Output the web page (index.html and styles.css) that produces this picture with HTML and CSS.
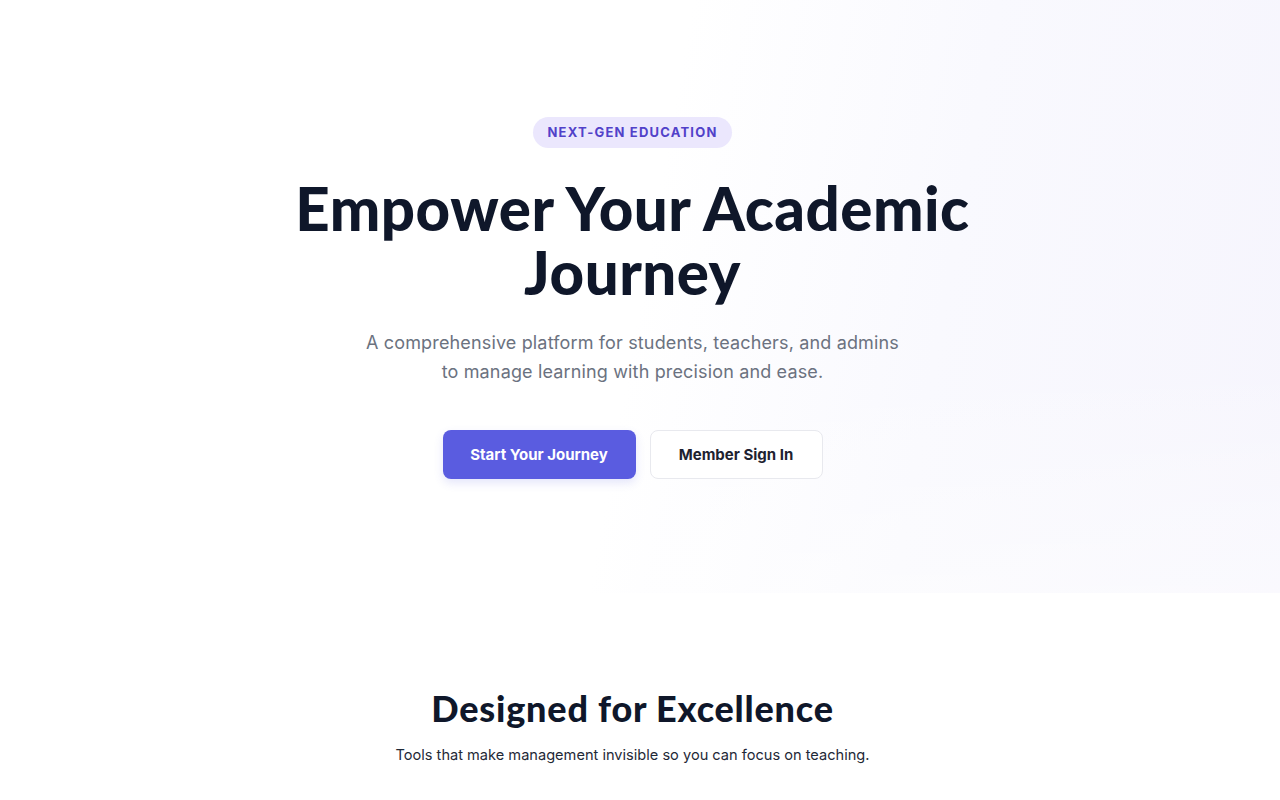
FILE: index.html
```html
<!DOCTYPE html>
<html lang="en">
<head>
<meta charset="utf-8">
<title>Empower Your Academic Journey</title>
<link rel="stylesheet" href="styles.css">
</head>
<body>
<section class="hero">
  <div class="hero-inner">
    <span class="badge">NEXT-GEN EDUCATION</span>
    <h1 class="hero-title"><span class="title-line">Empower Your Academic</span><span class="title-line">Journey</span></h1>
    <p class="hero-sub">A comprehensive platform for students, teachers, and admins<br>to manage learning with precision and ease.</p>
    <div class="actions">
      <a class="btn btn-primary" href="#">Start Your Journey</a>
      <a class="btn btn-secondary" href="#">Member Sign In</a>
    </div>
  </div>
</section>
<section class="features">
  <h2 class="features-title">Designed for Excellence</h2>
  <p class="features-sub">Tools that make management invisible so you can focus on teaching.</p>
</section>
</body>
</html>
```
FILE: styles.css
```css
* { box-sizing: border-box; }
html, body { margin: 0; padding: 0; }
body {
  font-family: Inter, "Liberation Sans", sans-serif;
  background: #ffffff;
  color: #0f172a;
  overflow: hidden;
}
.hero {
  height: 593px;
  background:
    linear-gradient(to bottom, rgba(255,255,255,0) 60%, rgba(255,255,255,0.45) 100%),
    linear-gradient(100deg, #ffffff 0%, #ffffff 50%, #f9f9fe 72%, #f6f5fd 100%);
}
.hero-inner {
  display: flex;
  flex-direction: column;
  align-items: center;
  padding: 117px 15px 0 0;
}
.badge {
  display: inline-block;
  height: 31px;
  line-height: 31px;
  padding: 0 14px;
  border-radius: 16px;
  background: #ebe7fd;
  color: #5141c9;
  font-size: 13px;
  font-weight: 700;
  letter-spacing: 1.2px;
}
.hero-title {
  margin: 28px 0 0;
  display: flex;
  flex-direction: column;
  align-items: center;
  font-family: Lato, "Noto Sans", sans-serif;
  font-weight: 900;
  font-size: 60px;
  line-height: 64px;
  letter-spacing: 0.5px;
  color: #0f172a;
  text-align: center;
}
.title-line {
  display: block;
  height: 64px;
}
.hero-sub {
  margin: 24px 0 0;
  font-size: 18px;
  line-height: 29px;
  letter-spacing: 0.15px;
  color: #6b7280;
  text-align: center;
}
.actions {
  display: flex;
  gap: 14px;
  margin-top: 44px;
}
.btn {
  display: inline-flex;
  align-items: center;
  justify-content: center;
  height: 49px;
  border-radius: 8px;
  font-size: 15px;
  font-weight: 650;
  text-decoration: none;
}
.btn-primary {
  width: 193px;
  background: #5a5ce0;
  color: #ffffff;
  box-shadow: 0 4px 10px rgba(90, 92, 224, 0.16);
}
.btn-secondary {
  width: 173px;
  background: #ffffff;
  color: #1e2230;
  border: 1px solid #e8e9ee;
}
.features {
  display: flex;
  flex-direction: column;
  align-items: center;
  padding: 93px 15px 0 0;
}
.features-title {
  margin: 0;
  font-family: Lato, "Noto Sans", sans-serif;
  font-weight: 900;
  font-size: 36px;
  line-height: 44px;
  letter-spacing: 0.8px;
  color: #0f172a;
}
.features-sub {
  margin: 14px 0 0;
  font-size: 14.6px;
  line-height: 22px;
  color: #1f2937;
}
```
